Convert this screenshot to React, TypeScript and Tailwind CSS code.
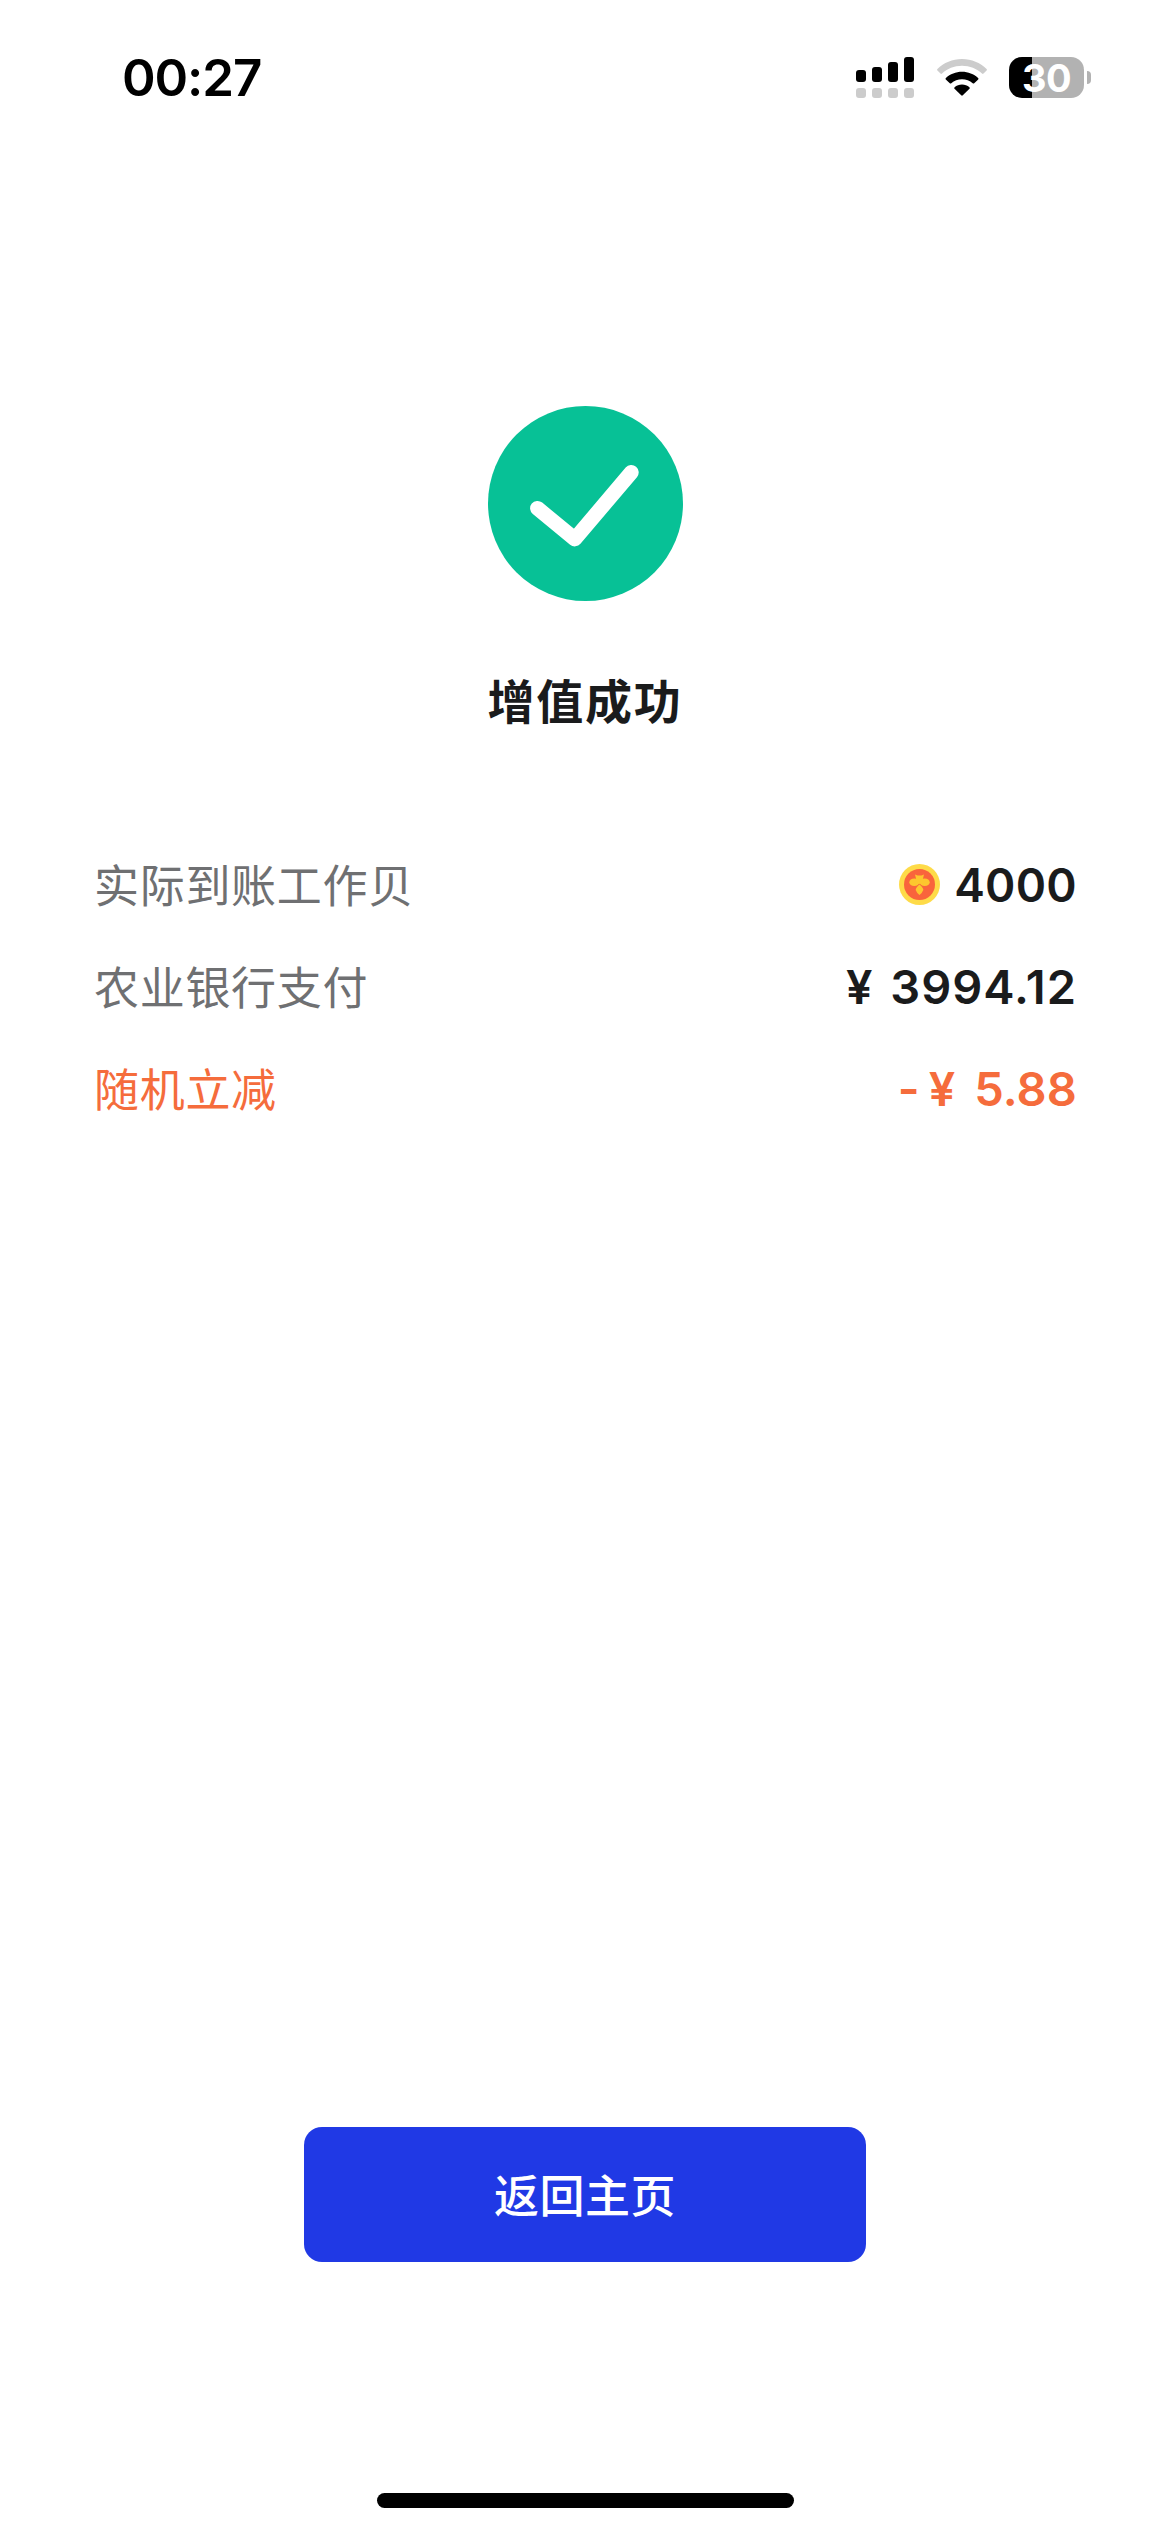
import React from "react";

function SignalIcon() {
  return (
    <svg width="58" height="41" viewBox="0 0 58 41" fill="#000">
      <rect x="0" y="13" width="10" height="12" rx="3" />
      <rect x="16" y="10" width="10" height="15" rx="3" />
      <rect x="32" y="5" width="10" height="20" rx="3" />
      <rect x="48" y="0" width="10" height="25" rx="3" />
      <g fill="#cccccc">
        <rect x="0" y="31" width="10" height="10" rx="3" />
        <rect x="16" y="31" width="10" height="10" rx="3" />
        <rect x="32" y="31" width="10" height="10" rx="3" />
        <rect x="48" y="31" width="10" height="10" rx="3" />
      </g>
    </svg>
  );
}

function WifiIcon() {
  return (
    <svg width="50" height="37" viewBox="0 0 50 37" fill="#000">
      <path
        d="M25 0C34.6 0 43.2 3.8 49.6 10Q50.3 10.8 49.6 11.5L46.5 14.6Q45.8 15.3 45 14.6C39.8 9.7 32.8 6.8 25 6.8S10.2 9.7 5 14.6Q4.2 15.3 3.5 14.6L.4 11.5Q-.3 10.8 .4 10C6.8 3.8 15.4 0 25 0Z"
        fill="#cccccc"
      />
      <path d="M25 12.8C31.2 12.8 36.8 15.1 41.1 18.9Q41.9 19.6 41.2 20.4L37.2 24.2Q36.5 24.8 35.7 24.2C32.8 21.7 29.1 20.2 25 20.2S17.2 21.7 14.3 24.2Q13.5 24.8 12.8 24.2L8.8 20.4Q8.1 19.6 8.9 18.9C13.2 15.1 18.8 12.8 25 12.8Z" />
      <path d="M25 25.6C27.8 25.6 30.4 26.6 32.4 28.2Q33.2 28.9 32.5 29.7L25.8 36.3Q25 37 24.2 36.3L17.5 29.7Q16.8 28.9 17.6 28.2C19.6 26.6 22.2 25.6 25 25.6Z" />
    </svg>
  );
}

function Battery() {
  return (
    <div className="flex items-center gap-[3px]">
      <div className="flex h-[41px] w-[75px] items-center justify-center rounded-[13px] bg-[linear-gradient(to_right,#000_23px,#b2b2b2_23px)] text-[38px] leading-none font-bold tracking-[-0.5px] text-white">
        30
      </div>
      <div className="h-[13px] w-[4px] rounded-r-full bg-[#b2b2b2]" />
    </div>
  );
}

function StatusBar() {
  return (
    <div className="flex h-[155px] items-center justify-between pr-[79px] pl-[122px]">
      <span className="text-[51px] leading-none font-semibold tracking-[-1.1px] text-black">
        00:27
      </span>
      <div className="flex items-center">
        <SignalIcon />
        <div className="ml-[23px]">
          <WifiIcon />
        </div>
        <div className="ml-[22px]">
          <Battery />
        </div>
      </div>
    </div>
  );
}

function SuccessIcon() {
  return (
    <svg width="195" height="195" viewBox="0 0 195 195" fill="none">
      <circle cx="97.5" cy="97.5" r="97.5" fill="#07c196" />
      <path
        d="M49.5 102.3L86.8 133L143.3 66.4"
        stroke="#fff"
        strokeWidth="14.8"
        strokeLinecap="round"
        strokeLinejoin="round"
      />
    </svg>
  );
}

function CoinIcon() {
  return (
    <svg width="41" height="41" viewBox="0 0 41 41">
      <circle cx="20.5" cy="20.5" r="20.5" fill="#fedb48" />
      <circle cx="20.5" cy="20.5" r="15.5" fill="#f9643c" />
      {/* bee */}
      <g fill="#fdc62e">
        <path d="M16 10.5L18.5 11.5H22.5L25 10.5L24 14.5L23.5 19L20.5 20L17.5 19L17 14.5Z" />
        <ellipse cx="15.3" cy="18.3" rx="5" ry="3.8" />
        <ellipse cx="25.7" cy="18.3" rx="5" ry="3.8" />
        <path d="M20.5 20.5Q24.3 23.5 24.3 26Q23.5 28.5 20.5 31Q17.5 28.5 16.7 26Q16.7 23.5 20.5 20.5Z" />
      </g>
    </svg>
  );
}

export default function App() {
  return (
    <div className="flex h-[2532px] w-[1170px] flex-col bg-white font-['Inter','Noto_Sans_CJK_SC',sans-serif]">
      <StatusBar />

      {/* Result */}
      <div className="flex flex-col items-center pt-[251px]">
        <SuccessIcon />
        <h1 className="mt-[66px] text-[47px] leading-[70px] font-bold tracking-[1.7px] text-[#1a1b1c]">
          增值成功
        </h1>
      </div>

      {/* Payment details */}
      <div className="mt-[97px] flex flex-col pr-[93px] pl-[94px] text-[45px] tracking-[0.7px] text-[#6f7072]">
        <div className="flex h-[102px] items-center justify-between">
          <span className="pt-[3px]">实际到账工作贝</span>
          <div className="flex items-center gap-[14px]">
            <div className="mb-[2px]">
              <CoinIcon />
            </div>
            <span className="text-[46px] font-semibold tracking-[0.3px] text-[#1a1b1c]">4000</span>
          </div>
        </div>
        <div className="flex h-[102px] items-center justify-between">
          <span className="pt-[3px]">农业银行支付</span>
          <span className="text-[47px] font-semibold tracking-[1px] text-[#1a1b1c] [word-spacing:4px]">
            ¥ 3994.12
          </span>
        </div>
        <div className="flex h-[102px] items-center justify-between text-[#f56c3c]">
          <span className="pt-[3px]">随机立减</span>
          <span className="text-[47px] font-semibold tracking-[0.1px] [word-spacing:7px]">
            <span className="mr-[9px]">-</span>¥ 5.88
          </span>
        </div>
      </div>

      <div className="mt-auto flex flex-col items-center pb-[24px]">
        <button className="h-[135px] w-[562px] rounded-[18px] bg-[#2039e5] pt-[4px] text-[45px] font-medium tracking-[0.5px] text-white">
          返回主页
        </button>
        <div className="mt-[231px] h-[15px] w-[417px] rounded-full bg-black" />
      </div>
    </div>
  );
}
